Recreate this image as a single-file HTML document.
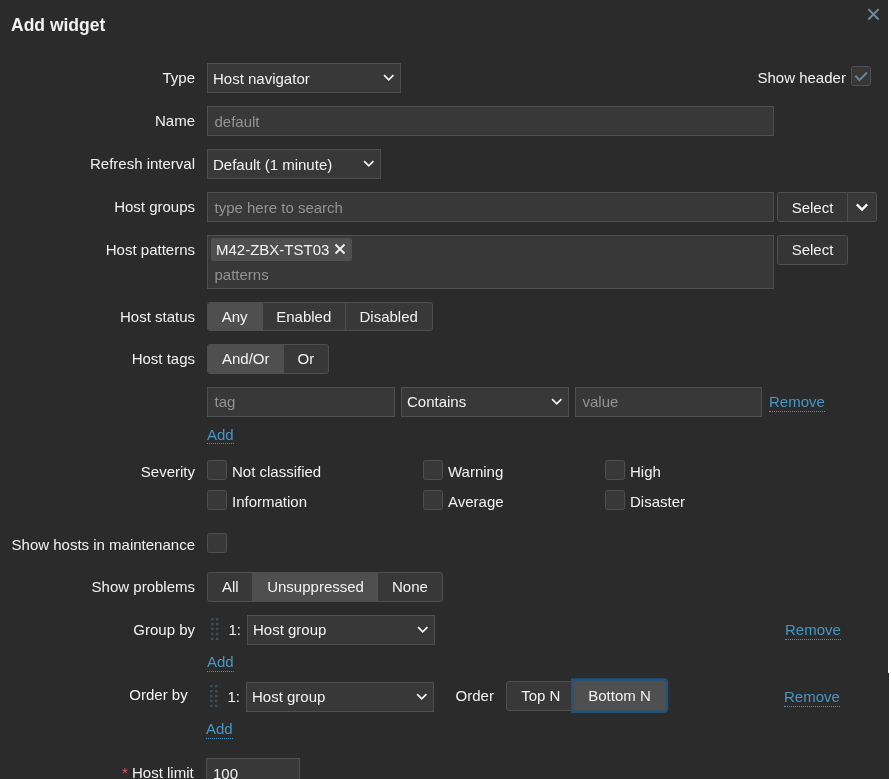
<!DOCTYPE html>
<html lang="en">
<head>
<meta charset="utf-8">
<title>Add widget</title>
<style>
html,body{margin:0;padding:0;}
body{width:891px;height:779px;overflow:hidden;background:#2b2b2b;color:#f2f2f2;font-family:"Liberation Sans",Arial,sans-serif;font-size:15px;position:relative;}
#dlg{position:absolute;left:0;top:0;width:891px;height:779px;overflow:hidden;will-change:transform;}
.abs{position:absolute;box-sizing:border-box;white-space:nowrap;}
.lbl{position:absolute;left:0;width:195px;height:30px;line-height:30px;text-align:right;white-space:nowrap;}
.inp{position:absolute;box-sizing:border-box;height:30px;background:#383838;border:1px solid #4f4f4f;line-height:30px;padding-left:6.5px;color:#939393;white-space:nowrap;}
.sel{position:absolute;box-sizing:border-box;height:30px;background:#383838;border:1px solid #4f4f4f;line-height:30px;padding-left:5px;color:#f2f2f2;white-space:nowrap;}
.sel svg{position:absolute;right:5px;top:10px;}
.btn{position:absolute;box-sizing:border-box;height:30px;background:#353535;border:1px solid #4f4f4f;line-height:30px;text-align:center;color:#f2f2f2;border-radius:2.5px;}
.seg{position:absolute;box-sizing:border-box;height:30px;border:1px solid #4f4f4f;border-radius:3px;background:#383838;overflow:hidden;}
.seg span{position:absolute;top:0;height:28px;line-height:28px;text-align:left;box-sizing:border-box;white-space:nowrap;}
.seg span.on{background:#4f4f4f;}
.seg span.br{border-left:1px solid #4f4f4f;}
.cb{position:absolute;box-sizing:border-box;width:20px;height:20px;background:#383838;border:1px solid #4f4f4f;border-radius:2.5px;}
.txt{position:absolute;height:30px;line-height:30px;white-space:nowrap;}
.lnk{position:absolute;height:19px;line-height:20px;color:#4796c4;white-space:nowrap;border-bottom:1px dotted #4796c4;}
</style>
</head>
<body>
<div id="dlg">
  <div class="abs" style="left:11px;top:11px;font-size:17.5px;font-weight:bold;line-height:28px;height:28px;">Add widget</div>
  <svg class="abs" style="left:864px;top:5px;" width="20" height="20" viewBox="0 0 20 20"><path d="M4.35 4.15 L14.65 14.45 M14.65 4.15 L4.35 14.45" stroke="#6f8a9b" stroke-width="2" fill="none"/></svg>

  <!-- Type -->
  <div class="lbl" style="top:63px;">Type</div>
  <div class="sel" style="left:207px;top:63px;width:194px;">Host navigator<svg width="13" height="8" viewBox="0 0 13 8"><path d="M2.1 1.2 L6.75 5.9 L11.4 1.2" stroke="#f2f2f2" stroke-width="1.7" fill="none"/></svg></div>
  <div class="txt" style="left:757.5px;top:63px;">Show header</div>
  <div class="cb" style="left:851px;top:66px;"><svg class="abs" style="left:2px;top:3px" width="14" height="12" viewBox="0 0 14 12"><path d="M1.35 5.6 L5.4 10.1 L13 2.5" stroke="#6b8b9d" stroke-width="1.9" fill="none"/></svg></div>

  <!-- Name -->
  <div class="lbl" style="top:106px;">Name</div>
  <div class="inp" style="left:207px;top:106px;width:567px;">default</div>

  <!-- Refresh -->
  <div class="lbl" style="top:149px;">Refresh interval</div>
  <div class="sel" style="left:207px;top:149px;width:174px;">Default (1 minute)<svg width="13" height="8" viewBox="0 0 13 8"><path d="M2.1 1.2 L6.75 5.9 L11.4 1.2" stroke="#f2f2f2" stroke-width="1.7" fill="none"/></svg></div>

  <!-- Host groups -->
  <div class="lbl" style="top:192px;">Host groups</div>
  <div class="inp" style="left:207px;top:192px;width:567px;">type here to search</div>
  <div class="btn" style="left:777px;top:192px;width:71px;border-radius:2.5px 0 0 2.5px;">Select</div>
  <div class="btn" style="left:847px;top:192px;width:30px;border-radius:0 2.5px 2.5px 0;background:#383838;"><svg class="abs" style="left:8px;top:10px;overflow:visible" width="12" height="8" viewBox="0 0 12 8"><path d="M0.8 1.3 L6 6.5 L11.2 1.3" stroke="#f9f9f9" stroke-width="2.4" fill="none"/></svg></div>

  <!-- Host patterns -->
  <div class="lbl" style="top:235px;">Host patterns</div>
  <div class="inp" style="left:207px;top:235px;width:567px;height:54px;"></div>
  <div class="abs" style="left:211px;top:238px;width:141px;height:23px;background:#4f4f4f;border-radius:2px;line-height:23px;padding-left:5px;">M42-ZBX-TST03</div>
  <svg class="abs" style="left:334px;top:243px;" width="12" height="12" viewBox="0 0 12 12"><path d="M1.5 1.5 L10.5 10.5 M10.5 1.5 L1.5 10.5" stroke="#f2f2f2" stroke-width="1.8" fill="none"/></svg>
  <div class="txt" style="left:214.5px;top:260px;color:#939393;">patterns</div>
  <div class="btn" style="left:777px;top:235px;width:71px;line-height:28px;">Select</div>

  <!-- Host status -->
  <div class="lbl" style="top:302px;">Host status</div>
  <div class="seg" style="left:207px;top:302px;width:226px;height:29px;"><span class="on" style="left:0;width:55px;padding-left:13.75px;">Any</span><span style="left:55px;width:83px;padding-left:13.25px;">Enabled</span><span class="br" style="left:137px;width:87px;padding-left:13.5px;">Disabled</span></div>

  <!-- Host tags -->
  <div class="lbl" style="top:344px;">Host tags</div>
  <div class="seg" style="left:207px;top:344px;width:122px;"><span class="on" style="left:0;width:76px;padding-left:14px;">And/Or</span><span style="left:76px;width:44px;padding-left:13.5px;">Or</span></div>

  <div class="inp" style="left:207px;top:387px;width:188px;line-height:28px;">tag</div>
  <div class="sel" style="left:401px;top:387px;width:168px;line-height:28px;">Contains<svg width="13" height="8" viewBox="0 0 13 8"><path d="M2.1 1.2 L6.75 5.9 L11.4 1.2" stroke="#f2f2f2" stroke-width="1.7" fill="none"/></svg></div>
  <div class="inp" style="left:575px;top:387px;width:187px;line-height:28px;">value</div>
  <div class="lnk" style="left:769px;top:392px;">Remove</div>
  <div class="lnk" style="left:207px;top:425px;height:18px;">Add</div>

  <!-- Severity -->
  <div class="lbl" style="top:457px;">Severity</div>
  <div class="cb" style="left:207px;top:460px;"></div><div class="txt" style="left:232px;top:457px;">Not classified</div>
  <div class="cb" style="left:423px;top:460px;"></div><div class="txt" style="left:448px;top:457px;">Warning</div>
  <div class="cb" style="left:605px;top:460px;"></div><div class="txt" style="left:630px;top:457px;">High</div>
  <div class="cb" style="left:207px;top:490px;"></div><div class="txt" style="left:232px;top:487px;">Information</div>
  <div class="cb" style="left:423px;top:490px;"></div><div class="txt" style="left:448px;top:487px;">Average</div>
  <div class="cb" style="left:605px;top:490px;"></div><div class="txt" style="left:630px;top:487px;">Disaster</div>

  <!-- Maintenance -->
  <div class="lbl" style="top:530px;">Show hosts in maintenance</div>
  <div class="cb" style="left:207px;top:533px;"></div>

  <!-- Show problems -->
  <div class="lbl" style="top:572px;">Show problems</div>
  <div class="seg" style="left:207px;top:572px;width:236px;"><span style="left:0;width:44px;padding-left:14px;">All</span><span class="on" style="left:44px;width:126px;padding-left:15.2px;">Unsuppressed</span><span style="left:170px;width:64px;padding-left:14px;">None</span></div>

  <!-- Group by -->
  <div class="lbl" style="top:615px;">Group by</div>
  <svg class="abs" style="left:211.1px;top:618.1px;" width="9" height="24" viewBox="0 0 9 24" fill="#394e5b"><rect x="0.00" y="0.00" width="2.5" height="2.4"/><rect x="4.95" y="0.00" width="2.5" height="2.4"/><rect x="0.00" y="4.93" width="2.5" height="2.4"/><rect x="4.95" y="4.93" width="2.5" height="2.4"/><rect x="0.00" y="9.86" width="2.5" height="2.4"/><rect x="4.95" y="9.86" width="2.5" height="2.4"/><rect x="0.00" y="14.79" width="2.5" height="2.4"/><rect x="4.95" y="14.79" width="2.5" height="2.4"/><rect x="0.00" y="19.72" width="2.5" height="2.4"/><rect x="4.95" y="19.72" width="2.5" height="2.4"/></svg>
  <div class="txt" style="left:228.5px;top:615px;">1:</div>
  <div class="sel" style="left:247px;top:615px;width:188px;line-height:28px;">Host group<svg width="13" height="8" viewBox="0 0 13 8"><path d="M2.1 1.2 L6.75 5.9 L11.4 1.2" stroke="#f2f2f2" stroke-width="1.7" fill="none"/></svg></div>
  <div class="lnk" style="left:785px;top:620px;">Remove</div>
  <div class="lnk" style="left:207px;top:652px;">Add</div>

  <!-- Order by -->
  <div class="lbl" style="top:680px;left:-7.3px;">Order by</div>
  <svg class="abs" style="left:210.1px;top:685.1px;" width="9" height="24" viewBox="0 0 9 24" fill="#394e5b"><rect x="0.00" y="0.00" width="2.5" height="2.4"/><rect x="4.95" y="0.00" width="2.5" height="2.4"/><rect x="0.00" y="4.93" width="2.5" height="2.4"/><rect x="4.95" y="4.93" width="2.5" height="2.4"/><rect x="0.00" y="9.86" width="2.5" height="2.4"/><rect x="4.95" y="9.86" width="2.5" height="2.4"/><rect x="0.00" y="14.79" width="2.5" height="2.4"/><rect x="4.95" y="14.79" width="2.5" height="2.4"/><rect x="0.00" y="19.72" width="2.5" height="2.4"/><rect x="4.95" y="19.72" width="2.5" height="2.4"/></svg>
  <div class="txt" style="left:227.5px;top:682px;">1:</div>
  <div class="sel" style="left:246px;top:682px;width:188px;line-height:28px;">Host group<svg width="13" height="8" viewBox="0 0 13 8"><path d="M2.1 1.2 L6.75 5.9 L11.4 1.2" stroke="#f2f2f2" stroke-width="1.7" fill="none"/></svg></div>
  <div class="txt" style="left:455.6px;top:681px;">Order</div>
  <div class="seg" style="left:506px;top:681px;width:70px;border-radius:3px 0 0 3px;"><span style="left:0;width:67px;padding-left:14.25px;">Top N</span></div>
  <svg class="abs" style="left:565px;top:672px;" width="110" height="48" viewBox="0 0 110 48"><path d="M6 6.2 H99 A4.2 4.2 0 0 1 103.2 10.4 V36.9 A4.2 4.2 0 0 1 99 41.1 H6 Z" fill="#23527a"/><path d="M8.5 9 H98.7 A2 2 0 0 1 100.7 11 V36.6 A2 2 0 0 1 98.7 38.6 H8.5 Z" fill="#4f4f4f"/></svg>
  <div class="abs" style="left:573px;top:681px;width:93px;height:30px;line-height:30px;text-align:center;">Bottom N</div>
  <div class="lnk" style="left:784px;top:687px;">Remove</div>
  <div class="lnk" style="left:206px;top:719px;">Add</div>

  <!-- Host limit -->
  <div class="lbl" style="top:758px;left:-1.3px;"><span style="color:#e45959;">*</span> Host limit</div>
  <div class="sel" style="left:206px;top:758px;width:94px;padding-left:6px;">100</div>

  <!-- right white strip -->
  <div class="abs" style="left:888px;top:0;width:3px;height:673px;background:#ffffff;"></div>
  <div class="abs" style="left:889px;top:673px;width:2px;height:106px;background:#ffffff;"></div>
</div>
</body>
</html>
